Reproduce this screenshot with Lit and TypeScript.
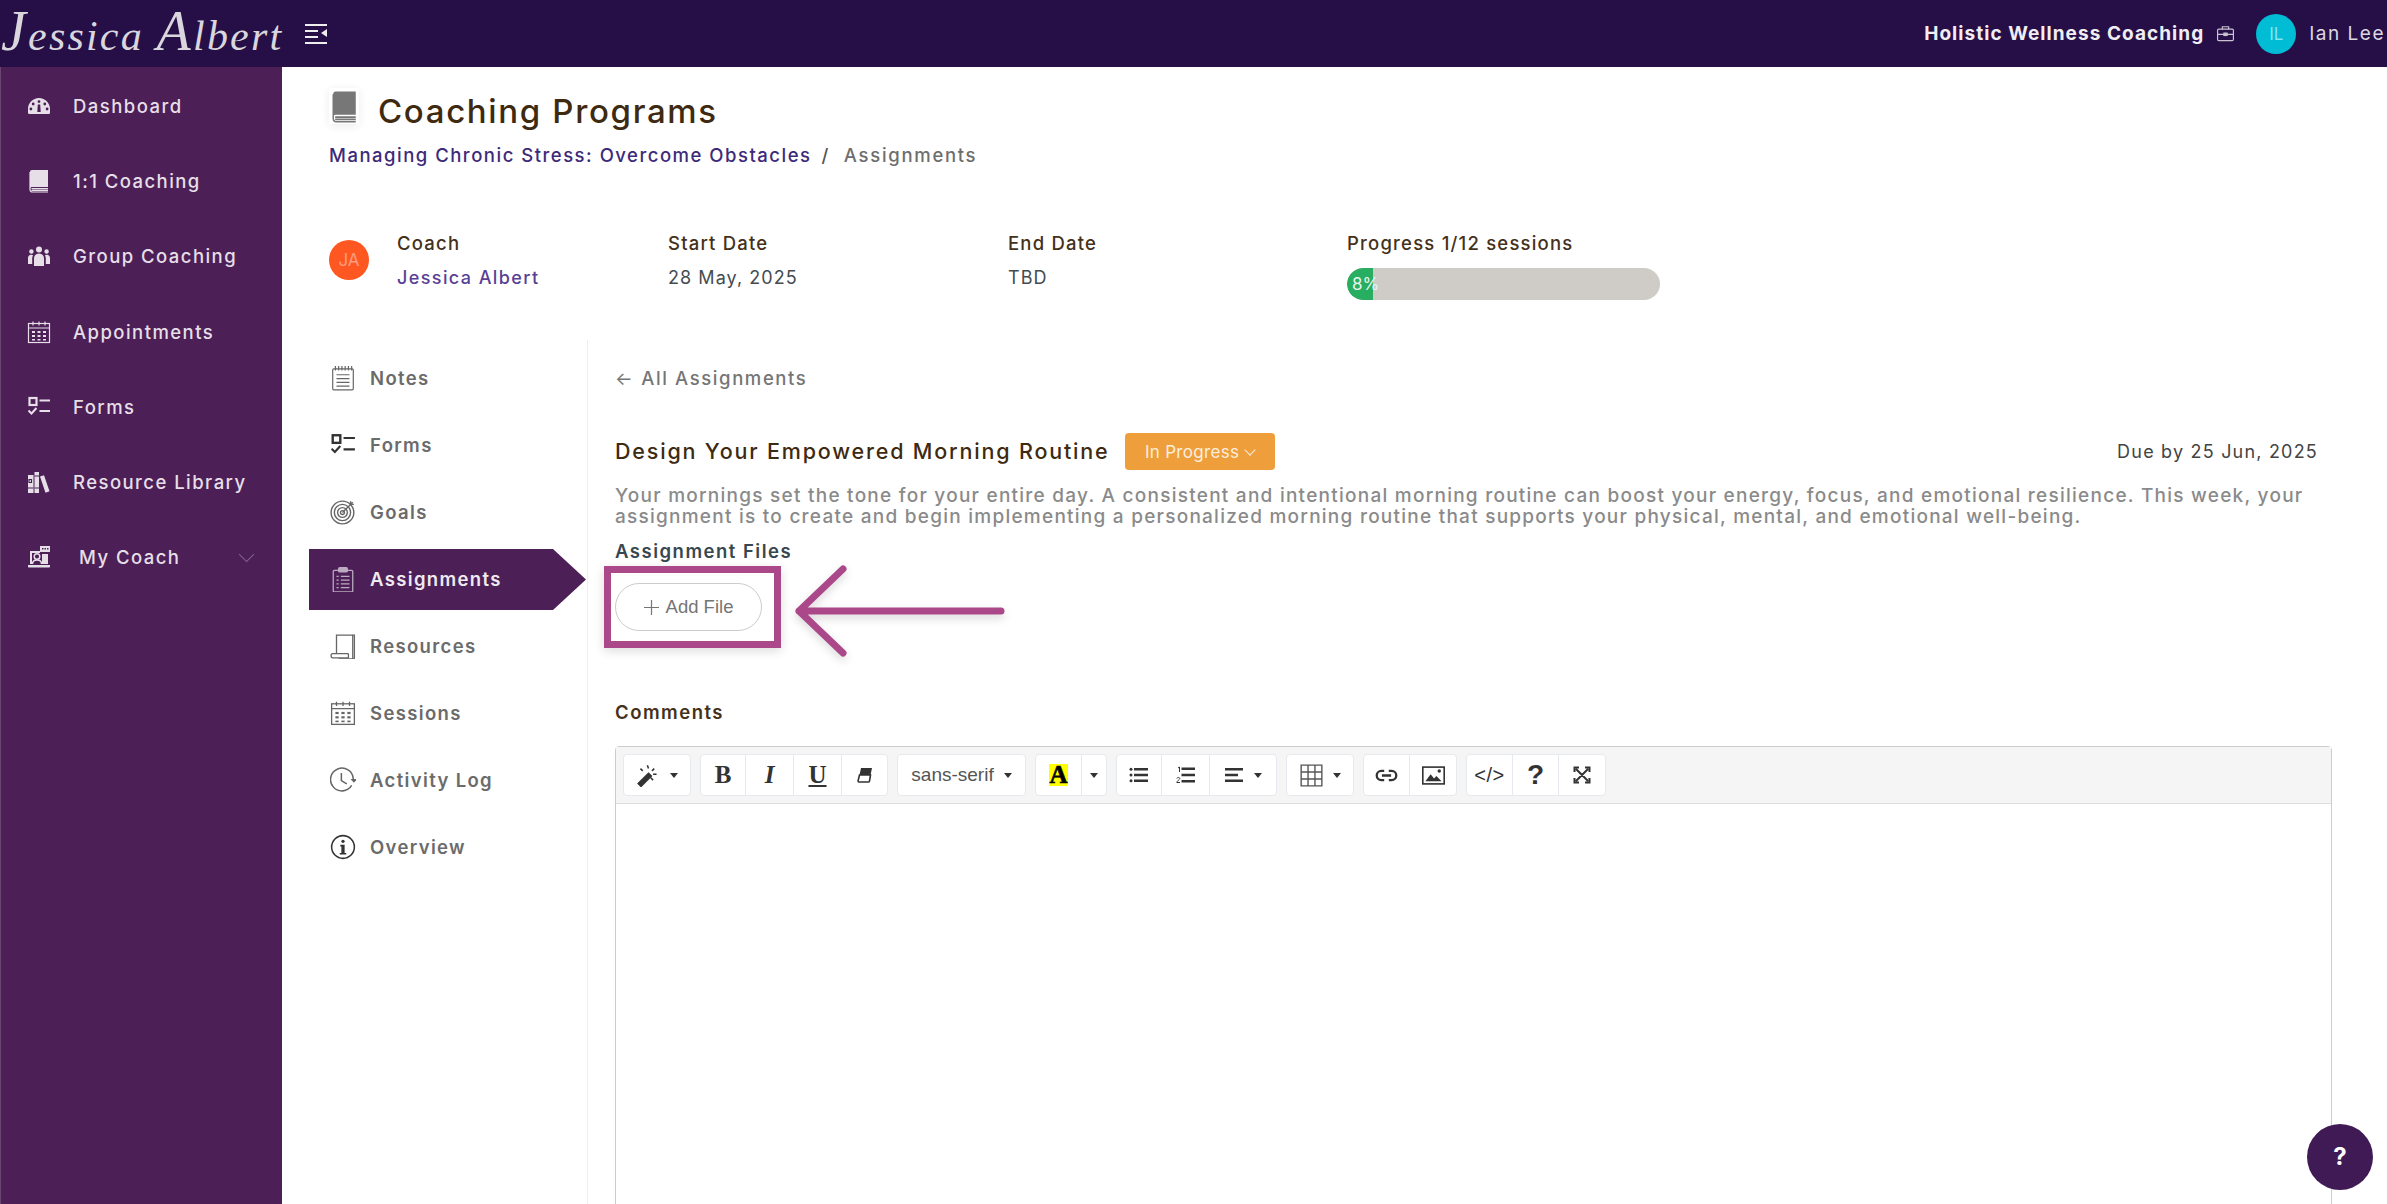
import { LitElement, html, svg, css } from 'lit';
import { customElement } from 'lit/decorators.js';

// 24x24 icons, all inherit currentColor
const icons: Record<string, unknown> = {
  dashboard: svg`<path fill="currentColor" fill-rule="evenodd" d="M12 4C5.800 4 1 9 1 15v3.500c0 1 .7 1.500 1.500 1.500h19c.8 0 1.500-.5 1.500-1.500V15c0-6-4.800-11-11-11zM12 6.200a1.400 1.400 0 1 1 0 2.800 1.400 1.400 0 0 1 0-2.800zM6.200 8.600a1.400 1.400 0 1 1 0 2.800 1.400 1.400 0 0 1 0-2.800zM17.800 8.600a1.400 1.400 0 1 1 0 2.800 1.400 1.400 0 0 1 0-2.800zM3.900 13.600a1.400 1.400 0 1 1 0 2.800 1.400 1.400 0 0 1 0-2.800zM20.100 13.600a1.400 1.400 0 1 1 0 2.800 1.400 1.400 0 0 1 0-2.800zM13.200 10.500l.5 7.500h-3.400l.5-7.500z"/>`,
  book: svg`<path fill="currentColor" d="M5 1h16v17H5c-1 0-2 .6-2 1.500V3c0-1.200.5-2 2-2z"/><path fill="none" stroke="currentColor" stroke-width="1.200" d="M3 3v17.500C3 22 4 23 5.500 23H21M4.500 19.700H21M4.500 21.300H21"/>`,
  users: svg`<circle cx="12" cy="5.500" r="3" fill="currentColor"/><circle cx="4.400" cy="7.500" r="2.200" fill="currentColor"/><circle cx="19.600" cy="7.500" r="2.200" fill="currentColor"/><path fill="currentColor" d="M7 14.500c0-3 2-5 5-5s5 2 5 5V22H7zM1 14c0-2 1.200-3.300 3.300-3.300.7 0 1.300.2 1.800.5C5.500 12.200 5.200 13.300 5.200 14.500V20H1zM23 14c0-2-1.200-3.300-3.300-3.300-.7 0-1.300.2-1.800.5.6 1 .9 2.100.9 3.300V20H23z"/>`,
  calendar: svg`<g fill="none" stroke="currentColor" stroke-width="1.200"><rect x="1.500" y="3.500" width="21" height="19"/><path d="M1.500 8h21M6 1.500v4M12 1.500v4M18 1.500v4"/></g><g fill="currentColor"><rect x="5" y="11" width="3" height="2"/><rect x="10.500" y="11" width="3" height="2"/><rect x="16" y="11" width="3" height="2"/><rect x="5" y="15" width="3" height="2"/><rect x="10.500" y="15" width="3" height="2"/><rect x="16" y="15" width="3" height="2"/><rect x="5" y="19" width="3" height="1.500"/><rect x="10.500" y="19" width="3" height="1.500"/><rect x="16" y="19" width="3" height="1.500"/></g>`,
  forms: svg`<rect x="2.500" y="3" width="7" height="7" fill="none" stroke="currentColor" stroke-width="2.200"/><path d="M12.500 5.500h10.500M1.500 15.500l3 3 5-5.500M12.500 16h10.500" fill="none" stroke="currentColor" stroke-width="2"/>`,
  library: svg`<path fill="currentColor" d="M1 5h5.500v18H1zM7.500 2H12v21H7.500zM13 6.500l4-1.200 5.500 16-4 1.500z"/><path fill="none" stroke="var(--cut)" stroke-width="1.200" d="M2 9.500h2.500v3H2zM1 18h5.500M7.500 6h4.500M7.500 18h4.500"/>`,
  coach: svg`<path fill="currentColor" d="M3 6h10v2h-8v11H3zM15 9h6v10h-6z"/><rect x="13" y="1" width="10" height="6" fill="currentColor"/><path fill="var(--cut)" d="M15 3h1.500v1.500H15zM17.500 3H19v1.500h-1.500zM20 3h1.500v1.500H20z"/><circle cx="10" cy="11.500" r="2.800" fill="none" stroke="currentColor" stroke-width="1.500"/><path fill="none" stroke="currentColor" stroke-width="1.500" d="M5.500 19c0-2.600 2-4 4.500-4s4.500 1.400 4.500 4"/><path fill="currentColor" d="M1 20h22v1.500c0 .7-.5 1-1 1H2c-.5 0-1-.3-1-1z"/>`,
  notes: svg`<g fill="none" stroke="currentColor" stroke-width="1.100"><rect x="2.500" y="3.500" width="19" height="19.500" rx="1"/><path d="M5 1v4M8 1v4M11 1v4M14 1v4M17 1v4M20 1v4M6 9h12M6 12.500h12M6 16h12M6 19.500h12"/></g>`,
  target: svg`<g fill="none" stroke="currentColor" stroke-width="1.300"><circle cx="11.500" cy="12.500" r="10.500"/><circle cx="11.500" cy="12.500" r="7.500"/><circle cx="11.500" cy="12.500" r="4.500"/><circle cx="11.500" cy="12.500" r="1.800"/><path d="M11.500 12.500L21 3M19 2v3h3"/></g>`,
  clipboard: svg`<g fill="none" stroke="currentColor" stroke-width="1.200"><rect x="3" y="4" width="18" height="20" rx="1"/><rect x="8" y="1.500" width="8" height="4" rx="1" fill="currentColor"/><path d="M6 9.500h2M10 9.500h8M6 13h2M10 13h8M6 16.500h2M10 16.500h8M6 20h2M10 20h8"/></g>`,
  resources: svg`<g fill="none" stroke="currentColor" stroke-width="1.200"><path d="M6 19V2h15v22H8"/><path d="M6 19H2.500C1.500 19 1 19.800 1 20.800S1.500 23 2.500 23H17v-3.500c0-.3 0-.5-.5-.5H6z"/><path d="M21 2h1.500v22H21"/></g>`,
  history: svg`<g fill="none" stroke="currentColor" stroke-width="1.400"><path d="M20 17a10.500 10.500 0 1 1 1.500-6"/><path d="M10.500 5.500v7l5 3"/></g><path fill="currentColor" d="M19 11h6l-3 3.500z"/>`,
  info: svg`<circle cx="12" cy="12" r="10.500" fill="none" stroke="currentColor" stroke-width="1.400"/><circle cx="12" cy="6.800" r="1.500" fill="currentColor"/><path fill="currentColor" d="M9.500 10h4v7.500h1.500v1.500H9v-1.500h1.500V11.500h-1z"/>`,
  briefcase: svg`<g fill="none" stroke="currentColor" stroke-width="1.500"><rect x="2" y="6.500" width="20" height="14.500" rx="1.500"/><path d="M8 6.500V3.500h8v3M2 13h20"/><rect x="10" y="11.500" width="4" height="3" fill="currentColor"/></g>`,
};

const icon = (name: string) => html`<svg class="ic" viewBox="0 0 24 24">${icons[name]}</svg>`;

const caret = html`<span class="caret"></span>`;

const navItems = [
  ['dashboard', 'Dashboard'],
  ['book', '1:1 Coaching'],
  ['users', 'Group Coaching'],
  ['calendar', 'Appointments'],
  ['forms', 'Forms'],
  ['library', 'Resource Library'],
];

const tabItems = [
  ['notes', 'Notes'],
  ['forms', 'Forms'],
  ['target', 'Goals'],
  ['clipboard', 'Assignments'],
  ['resources', 'Resources'],
  ['calendar', 'Sessions'],
  ['history', 'Activity Log'],
  ['info', 'Overview'],
];

@customElement('app-root')
export class AppRoot extends LitElement {
  static styles = css`
    :host {
      display: block;
      position: relative;
      width: 100%;
      height: 100vh;
      overflow: hidden;
      background: #fff;
      font-family: Inter, 'Noto Sans', sans-serif;
      --cut: #4d1f57;
    }
    .ic { display: block; width: 24px; height: 24px; flex: none; }

    /* top bar */
    .topbar {
      height: 67px;
      background: #260f47;
      display: flex;
      align-items: center;
      color: #eee;
    }
    .logo {
      width: 282px;
      flex: none;
      height: 67px;
      box-sizing: border-box;
      padding: 7px 0 0 1px;
      font: italic 400 42px/58px 'Liberation Serif', serif;
      letter-spacing: 2.2px;
      white-space: nowrap;
      color: #d9d6de;
    }
    .logo b { font-weight: 400; font-size: 56px; line-height: 0; }
    .menu-btn { width: 22px; height: 20px; margin-left: 23px; color: #eee; }
    .top-right {
      margin-left: auto;
      display: flex;
      align-items: center;
    }
    .org { font-size: 19px; font-weight: 700; letter-spacing: 1.05px; color: #f0edf3; }
    .top-right .ic { width: 19px; height: 19px; margin-left: 12px; color: #c9c3d1; }
    .top-avatar {
      width: 40px; height: 40px; border-radius: 50%;
      background: #00bcd4; color: #7fe6f2;
      display: flex; align-items: center; justify-content: center;
      font-size: 17px; margin-left: 21px;
    }
    .user { font-size: 19px; letter-spacing: 1.5px; margin: 0 2px 0 13px; color: #dcd8e2; white-space: nowrap; }

    .body { display: flex; height: calc(100vh - 67px); }

    /* left sidebar */
    .sidebar {
      width: 282px;
      flex: none;
      background: #4d1f57;
      border-left: 1px solid #6a4572;
      box-sizing: border-box;
      padding-top: 1px;
      color: #e6dfe8;
    }
    .nav-item {
      height: 75.3px;
      display: flex;
      align-items: center;
      padding-left: 26px;
      font-size: 18.5px;
      font-weight: 500;
      letter-spacing: 1.45px;
    }
    .nav-item span { margin-left: 22px; }
    .nav-item.coach span { margin-left: 28px; }
    .chev {
      width: 10px; height: 10px;
      margin: -6px 30px 0 auto;
      border-right: 1.5px solid #84638c;
      border-bottom: 1.5px solid #84638c;
      transform: rotate(45deg);
    }

    /* page */
    .page { flex: 1; min-width: 0; }
    .head { padding: 24px 0 0 47px; }
    .title-row { display: flex; align-items: center; height: 40px; gap: 19px; }
    .title-icon {
      width: 30px; height: 36px;
      margin-top: -10px;
      color: #777;
      background: #fff;
      box-shadow: 0 2px 10px rgba(0, 0, 0, 0.08);
      display: flex; align-items: center; justify-content: center;
    }
    .title-icon .ic { width: 25px; height: 33px; }
    h1 {
      margin: 0;
      font-size: 33px;
      font-weight: 500;
      letter-spacing: 1.65px;
      color: #3e2a10;
    }
    .crumbs {
      margin-top: 12px;
      height: 24px;
      line-height: 24px;
      font-size: 18.5px;
      font-weight: 500;
      letter-spacing: 1.5px;
      color: #3e2a7a;
    }
    .crumbs i { font-style: normal; color: #555; margin: 0 14px 0 10px; }
    .crumbs em { font-style: normal; color: #6e6e6e; letter-spacing: 1.7px; }

    .info { display: flex; align-items: flex-start; margin-top: 64px; }
    .coach-avatar {
      width: 40px; height: 40px; border-radius: 50%;
      background: #ff5722; color: #ff9c7d;
      display: flex; align-items: center; justify-content: center;
      font-size: 17px; margin: 9px 28px 0 0; flex: none;
    }
    .cell { flex: none; }
    .lbl { height: 24px; line-height: 24px; font-size: 18.5px; font-weight: 500; letter-spacing: 1.2px; color: #45311a; }
    .val { margin-top: 11px; height: 24px; line-height: 24px; font-size: 18px; letter-spacing: 1.05px; color: #444c50; }
    .val.link { color: #5a3f96; font-weight: 500; letter-spacing: 1.4px; }
    .bar {
      margin-top: 13px;
      width: 313px; height: 32px;
      background: #cfccc8;
      border-radius: 16px;
      overflow: hidden;
      font-size: 17px;
      line-height: 32px;
      color: #e8f5ec;
    }
    .bar div { height: 100%; background: #27ae60; border-radius: 16px 0 0 16px; white-space: nowrap; padding-left: 5px; box-sizing: border-box; }

    .tabs-wrap { display: flex; margin: 40px 0 0 27px; height: 900px; }
    .tabs {
      width: 279px; flex: none;
      border-right: 1px solid #eee;
      box-sizing: border-box;
      padding-top: 8px;
    }
    .tab {
      height: 61px;
      margin-bottom: 6px;
      width: 277px;
      box-sizing: border-box;
      padding: 0 0 2px 21px;
      display: flex;
      align-items: center;
      gap: 14px;
      font-size: 18.5px;
      font-weight: 600;
      letter-spacing: 1.35px;
      color: #6b6b6b;
    }
    .tab .ic { width: 26px; height: 26px; color: #666; }
    .tab.dark .ic { color: #333; }
    .tab.on {
      background: #4d1f57;
      color: #efeaf0;
      clip-path: polygon(0 0, calc(100% - 33px) 0, 100% 50%, calc(100% - 33px) 100%, 0 100%);
    }
    .tab.on .ic { color: #bcaac0; }

    .pane { flex: 1; min-width: 0; padding: 26px 55px 0 27px; }
    .back { height: 24px; line-height: 24px; font-size: 18.5px; font-weight: 500; letter-spacing: 1.6px; color: #757575; }
    .back b { font-weight: 400; margin-right: 7px; }
    .task { display: flex; align-items: center; height: 37px; margin-top: 43px; padding-right: 14px; }
    .task h2 { margin: -2px 0 0; font-size: 21.5px; font-weight: 500; letter-spacing: 1.82px; color: #3e2a10; }
    .status {
      margin-left: 15px;
      height: 37px; width: 150px;
      background: #ef9e3c;
      border-radius: 4px;
      color: #fbeedd;
      font-size: 17px;
      letter-spacing: 0.3px;
      display: flex; align-items: center; justify-content: center; gap: 7px;
    }
    .status s {
      width: 7px; height: 7px; margin-top: -4px;
      border-right: 1px solid #fbeedd; border-bottom: 1px solid #fbeedd;
      transform: rotate(45deg);
    }
    .due { margin-left: auto; font-size: 18px; letter-spacing: 1.2px; color: #444; }
    .desc {
      margin: 15px 0 0;
      font-size: 19px;
      line-height: 21px;
      font-weight: 500;
      letter-spacing: 1.25px;
      white-space: nowrap;
      color: #8a8a8a;
    }
    .files-lbl, .comments-lbl { height: 24px; line-height: 24px; font-size: 18.5px; font-weight: 600; letter-spacing: 1.5px; }
    .files-lbl { margin-top: 12px; color: #37474f; }
    .add-file {
      margin-top: 20px;
      width: 147px; height: 48px;
      box-sizing: border-box;
      border: 1px solid #ccc;
      border-radius: 24px;
      display: flex; align-items: center; justify-content: center; gap: 7px;
      font: 18.5px 'Liberation Sans', sans-serif;
      color: #757575;
    }
    .add-file svg { width: 15px; height: 15px; }
    .comments-lbl { margin-top: 69px; color: #45311a; }

    .editor {
      margin-top: 22px;
      height: 600px;
      border: 1px solid #ccc;
      border-radius: 4px 4px 0 0;
    }
    .toolbar {
      height: 57px;
      box-sizing: border-box;
      padding: 7px 0 0 7px;
      background: #f5f5f5;
      border-bottom: 1px solid #ddd;
      display: flex;
      gap: 9px;
      font-family: 'Liberation Sans', sans-serif;
      color: #333;
    }
    .tb-group {
      display: flex;
      height: 42px;
      background: #fff;
      border: 1px solid #e6eaee;
      border-radius: 4px;
      box-sizing: border-box;
    }
    .tb {
      display: flex; align-items: center; justify-content: center; gap: 10px;
      box-sizing: border-box;
      border-right: 1px solid #e6eaee;
      height: 100%;
    }
    .tb:last-child { border-right: none; }
    .tb svg { width: 20px; height: 20px; display: block; }
    .tb svg.wide { width: 23px; height: 23px; }
    .caret {
      width: 0; height: 0;
      border-left: 4.5px solid transparent;
      border-right: 4.5px solid transparent;
      border-top: 5px solid #333;
    }
    .tb.serif { font: 700 25px 'Liberation Serif', serif; }
    .tb .under { text-decoration: underline; }
    .tb .hl { background: #ff0; color: #000; font: 900 25px/22px 'Liberation Serif', serif; width: 19px; text-align: center; -webkit-text-stroke: 0.6px #000; }
    .tb.font { font-size: 19px; color: #555; }
    .tb.q { font: 700 28px 'Liberation Sans', sans-serif; color: #333; }
    .tb.code { font-size: 20px; letter-spacing: 0.5px; }

    .help {
      position: absolute;
      right: 14px; bottom: 14px;
      width: 66px; height: 66px;
      border-radius: 50%;
      background: #3f1a55;
      color: #fff;
      font: 700 24px/66px Inter, sans-serif;
      text-align: center;
    }

    /* callout drawn over the screenshot */
    .mark-box {
      position: absolute;
      left: 604px; top: 566px;
      width: 177px; height: 82px;
      box-sizing: border-box;
      border: 7px solid #ab4889;
      box-shadow: 0 3px 10px rgba(0, 0, 0, 0.14);
    }
    .mark-arrow {
      position: absolute;
      left: 790px; top: 560px;
      width: 225px; height: 100px;
      filter: drop-shadow(0 4px 4px rgba(0, 0, 0, 0.15));
    }
  `;

  render() {
    return html`
      <div class="topbar">
        <div class="logo"><b>J</b>essica <b>A</b>lbert</div>
        <svg class="menu-btn" viewBox="0 0 22 20" fill="currentColor">
          <path d="M0 0h22v2H0zM0 6h13v2H0zM0 12h13v2H0zM0 18h22v2H0zM22 5v8l-6-4z"/>
        </svg>
        <div class="top-right">
          <span class="org">Holistic Wellness Coaching</span>
          ${icon('briefcase')}
          <div class="top-avatar">IL</div>
          <span class="user">Ian Lee</span>
        </div>
      </div>
      <div class="body">
        <aside class="sidebar">
          ${navItems.map(([ic, label]) => html`<div class="nav-item">${icon(ic)}<span>${label}</span></div>`)}
          <div class="nav-item coach">${icon('coach')}<span>My Coach</span><div class="chev"></div></div>
        </aside>
        <main class="page">
          <div class="head">
            <div class="title-row">
              <div class="title-icon"><svg class="ic" viewBox="2 0 20 24" preserveAspectRatio="none">${icons.book}</svg></div>
              <h1>Coaching Programs</h1>
            </div>
            <div class="crumbs">Managing Chronic Stress: Overcome Obstacles<i>/</i><em>Assignments</em></div>
            <div class="info">
              <div class="coach-avatar">JA</div>
              <div class="cell" style="width:271px"><div class="lbl">Coach</div><div class="val link">Jessica Albert</div></div>
              <div class="cell" style="width:340px"><div class="lbl">Start Date</div><div class="val">28 May, 2025</div></div>
              <div class="cell" style="width:339px"><div class="lbl">End Date</div><div class="val">TBD</div></div>
              <div class="cell">
                <div class="lbl">Progress 1/12 sessions</div>
                <div class="bar"><div style="width:8.3%">8%</div></div>
              </div>
            </div>
          </div>
          <div class="tabs-wrap">
            <nav class="tabs">
              ${tabItems.map(([ic, label]) => html`<div class="tab ${label === 'Assignments' ? 'on' : ''} ${label === 'Forms' || label === 'Overview' ? 'dark' : ''}">${icon(ic)}<span>${label}</span></div>`)}
            </nav>
            <section class="pane">
              <div class="back"><b>←</b>All Assignments</div>
              <div class="task">
                <h2>Design Your Empowered Morning Routine</h2>
                <div class="status">In Progress<s></s></div>
                <div class="due">Due by 25 Jun, 2025</div>
              </div>
              <p class="desc">Your mornings set the tone for your entire day. A consistent and intentional morning routine can boost your energy, focus, and emotional resilience. This week, your<br>assignment is to create and begin implementing a personalized morning routine that supports your physical, mental, and emotional well-being.</p>
              <div class="files-lbl">Assignment Files</div>
              <div class="add-file"><svg viewBox="0 0 15 15" stroke="#757575" stroke-width="1.2"><path d="M7.5 0v15M0 7.5h15"/></svg>Add File</div>
              <div class="comments-lbl">Comments</div>
              <div class="editor">${this.renderToolbar()}</div>
            </section>
          </div>
        </main>
      </div>
      <div class="help">?</div>
      <div class="mark-box"></div>
      <svg class="mark-arrow" viewBox="0 0 225 100" fill="none" stroke="#ab4889" stroke-width="7" stroke-linecap="round" stroke-linejoin="round">
        <path d="M53 9L9 51l44 42M9 51h202"/>
      </svg>
    `;
  }

  private renderToolbar() {
    return html`<div class="toolbar">
      <div class="tb-group">
        <div class="tb" style="width:66px">
          <svg class="wide" viewBox="0 0 20 20" fill="#333"><path d="M1 17l9-9 2.500 2.500-9 9zM9 1l1 3M3 4l2 2M15 4l-2 2M17 9h-3M14 14l-2-2" stroke="#333" stroke-width="1.300"/></svg>${caret}
        </div>
      </div>
      <div class="tb-group">
        <div class="tb serif" style="width:45px">B</div>
        <div class="tb serif" style="width:48px"><i>I</i></div>
        <div class="tb serif" style="width:48px"><span class="under">U</span></div>
        <div class="tb" style="width:45px">
          <svg viewBox="0 0 20 20"><path fill="#333" d="M6 3h11l-1.500 7H4.500z"/><path fill="none" stroke="#333" stroke-width="1.600" d="M4.500 10h11l-1 6a1 1 0 0 1-1 1H4a1 1 0 0 1-1-1z"/></svg>
        </div>
      </div>
      <div class="tb-group"><div class="tb font" style="width:127px">sans-serif${caret}</div></div>
      <div class="tb-group">
        <div class="tb" style="width:46px"><span class="hl">A</span></div>
        <div class="tb" style="width:24px">${caret}</div>
      </div>
      <div class="tb-group">
        <div class="tb" style="width:45px">
          <svg viewBox="0 0 20 20" fill="#333"><path d="M5 3h14v2.500H5zM5 8.700h14v2.500H5zM5 14.500h14V17H5z"/><circle cx="2" cy="4.200" r="1.500"/><circle cx="2" cy="10" r="1.500"/><circle cx="2" cy="15.800" r="1.500"/></svg>
        </div>
        <div class="tb" style="width:48px">
          <svg viewBox="0 0 20 20" fill="#333"><path d="M5.500 2.500H19V5H5.500zM5.500 8.700H19v2.500H5.500zM5.500 15H19v2.500H5.500z"/><path fill="none" stroke="#333" d="M2 3l1.500-1v5M.8 13.500c.5-1.500 3-1.200 3 0 0 1-3 2.500-3 4h3.200"/></svg>
        </div>
        <div class="tb" style="width:66px">
          <svg viewBox="0 0 20 20" fill="#333"><path d="M1 3h18v2.500H1zM1 8.700h13v2.500H1zM1 14.500h18V17H1z"/></svg>${caret}
        </div>
      </div>
      <div class="tb-group">
        <div class="tb" style="width:66px">
          <svg class="wide" viewBox="0 0 20 20" fill="none" stroke="#555" stroke-width="1.200"><path d="M1 1h18v18H1zM1 7h18M1 13h18M7 1v18M13 1v18"/></svg>${caret}
        </div>
      </div>
      <div class="tb-group">
        <div class="tb" style="width:46px">
          <svg class="wide" viewBox="0 0 20 20" fill="none" stroke="#333" stroke-width="2"><path d="M8 6H5.500a4 4 0 0 0 0 8H8M12 6h2.500a4 4 0 0 1 0 8H12M6 10h8"/></svg>
        </div>
        <div class="tb" style="width:46px">
          <svg class="wide" viewBox="0 0 20 20"><rect x="0.700" y="2.700" width="18.600" height="14.600" fill="none" stroke="#333" stroke-width="1.400"/><path fill="#333" d="M3 15l4.500-6 3 3.500 2-2 4.500 4.500z"/><circle cx="15" cy="6" r="1.500" fill="#333"/></svg>
        </div>
      </div>
      <div class="tb-group">
        <div class="tb code" style="width:46px">&lt;/&gt;</div>
        <div class="tb q" style="width:46px">?</div>
        <div class="tb" style="width:46px">
          <svg viewBox="0 0 20 20" fill="none" stroke="#333" stroke-width="2"><path d="M4 4l12 12M16 4L4 16M2.500 7V2.500H7M13 2.500h4.500V7M2.500 13v4.500H7M13 17.500h4.500V13"/></svg>
        </div>
      </div>
    </div>`;
  }
}
